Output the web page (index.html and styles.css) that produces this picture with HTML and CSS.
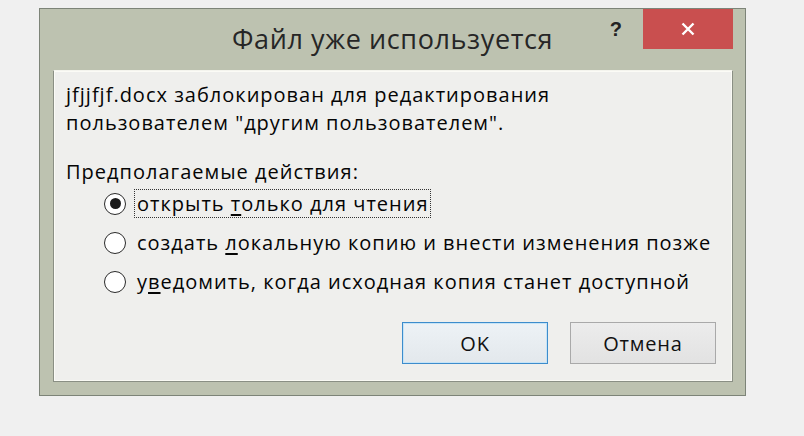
FILE: index.html
```html
<!DOCTYPE html>
<html lang="ru">
<head>
<meta charset="utf-8">
<title>Файл уже используется</title>
<link rel="stylesheet" href="styles.css">
</head>
<body>
<div class="window">
  <div class="titlebar">
    <div class="spacer"></div>
    <div class="title">Файл уже используется</div>
    <div class="controls">
      <span class="help">?</span>
      <span class="close">
        <svg width="16" height="16" viewBox="0 0 16 16"><path d="M2.5 2.5 L13.5 13.5 M13.5 2.5 L2.5 13.5" stroke="#fff" stroke-width="2.4" fill="none"/></svg>
      </span>
    </div>
  </div>
  <div class="panel">
    <p class="msg">jfjjfjf.docx заблокирован для редактирования<br>пользователем "другим пользователем".</p>
    <p class="label">Предполагаемые действия:</p>
    <div class="options">
      <div class="option"><span class="radio checked"></span><span class="otext focus">открыть <u>т</u>олько для чтения</span></div>
      <div class="option"><span class="radio"></span><span class="otext">создать <u>л</u>окальную копию и внести изменения позже</span></div>
      <div class="option"><span class="radio"></span><span class="otext">у<u>в</u>едомить, когда исходная копия станет доступной</span></div>
    </div>
    <div class="buttons">
      <button class="btn default">OK</button>
      <button class="btn">Отмена</button>
    </div>
  </div>
</div>
</body>
</html>
```
FILE: styles.css
```css
html, body {
  margin: 0;
  padding: 0;
}
body {
  background: #f0f0f0;
  width: 804px;
  height: 436px;
  overflow: hidden;
  font-family: "Open Sans", "Noto Sans", sans-serif;
  color: #050505;
}
.window {
  box-sizing: border-box;
  margin: 8px 0 0 39px;
  width: 707px;
  height: 388px;
  background: #bdc2b0;
  border: 1px solid #7d8478;
  padding: 0 12px 13px 13px;
  display: flex;
  flex-direction: column;
}
.titlebar {
  height: 61px;
  display: grid;
  grid-template-columns: 1fr auto 1fr;
  align-items: start;
  margin: 0 -12px 0 -13px;
}
.title {
  font-size: 27px;
  letter-spacing: 0.6px;
  color: #262626;
  padding-top: 13px;
  line-height: 34px;
}
.controls {
  justify-self: end;
  display: flex;
  align-items: flex-start;
  margin-right: 12px;
}
.help {
  font-family: "Liberation Sans", sans-serif;
  font-weight: bold;
  font-size: 20px;
  color: #222;
  margin-top: 9px;
  margin-right: 21px;
}
.close {
  width: 90px;
  height: 40px;
  background: #c94f4f;
  display: flex;
  align-items: center;
  justify-content: center;
}
.panel {
  flex: 1;
  background: #efefed;
  border: 1px solid #8a8f84;
  border-top-color: #f4f4ee;
  box-shadow: inset 1px 1px 0 #fbfbf6, inset -1px -1px 0 #fafaf4;
  display: flex;
  flex-direction: column;
  padding: 10px 16px 17px 12px;
  font-size: 20px;
  letter-spacing: 1px;
}
.msg {
  margin: 0;
  line-height: 28px;
}
.label {
  margin: 21px 0 0 0;
  line-height: 28px;
}
.options {
  display: flex;
  flex-direction: column;
  gap: 10px;
  margin-top: 3px;
  padding-left: 38px;
}
.option {
  display: flex;
  align-items: center;
  height: 29px;
}
.radio {
  box-sizing: border-box;
  width: 22px;
  height: 22px;
  border-radius: 50%;
  border: 1.6px solid #2a2a2a;
  background: #fff;
  margin-right: 8px;
  display: flex;
  align-items: center;
  justify-content: center;
  flex: none;
}
.radio.checked::after {
  content: "";
  width: 11px;
  height: 11px;
  border-radius: 50%;
  background: #1a1a1a;
}
.otext {
  padding: 0 2px;
  line-height: 27px;
  border: 1px dotted transparent;
  white-space: nowrap;
}
.otext.focus {
  border-color: #333;
}
.otext u {
  text-decoration-thickness: 2px;
  text-underline-offset: 3px;
}
.buttons {
  margin-top: auto;
  display: flex;
  justify-content: flex-end;
  gap: 22px;
}
.btn {
  box-sizing: border-box;
  width: 146px;
  height: 42px;
  font-family: inherit;
  font-size: 20px;
  letter-spacing: 0.8px;
  color: #111;
  background: linear-gradient(#ececec, #e2e2e2);
  border: 1.5px solid #a9a9a9;
  border-radius: 0;
  padding: 0;
}
.btn.default {
  border-color: #3d8ccc;
  box-shadow: inset 0 0 0 1px #c6e4f7;
  background: linear-gradient(#edf2f6, #e3e8ec);
}
```
